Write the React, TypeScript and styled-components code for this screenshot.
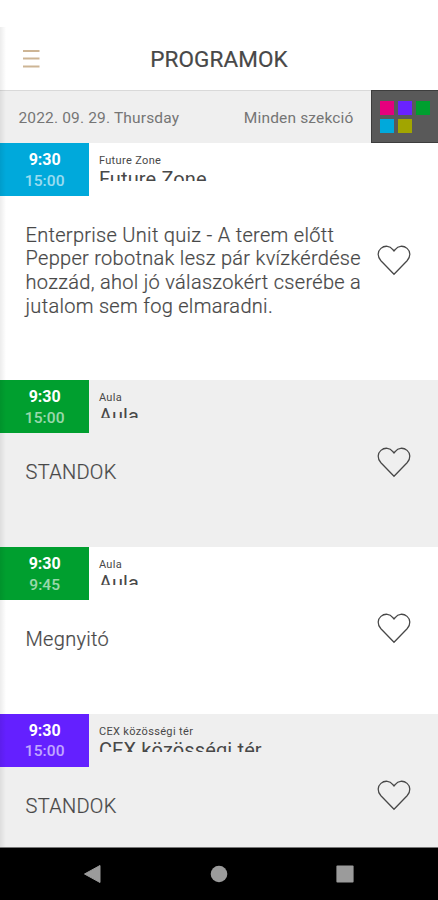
import React from "react";
import styled, { createGlobalStyle } from "styled-components";

const GlobalStyle = createGlobalStyle`
  * { box-sizing: border-box; }
  body { margin: 0; background: #fff; font-family: Roboto, sans-serif; color: #484848; }
`;

const Screen = styled.div`
  width: 438px;
  height: 900px;
  overflow: hidden;
  display: flex;
  flex-direction: column;
  background: #fff;
`;

const StatusSpace = styled.div`
  flex: 0 0 27px;
`;

const Content = styled.main`
  position: relative;
  flex: 1;
  min-height: 0;
  overflow: hidden;
`;

const EdgeShadow = styled.div`
  position: absolute;
  inset: 0 auto 0 0;
  width: 6px;
  background: linear-gradient(to right, rgba(0, 0, 0, 0.075), rgba(0, 0, 0, 0));
`;

const Header = styled.header`
  height: 63px;
  display: grid;
  grid-template-columns: 62px 1fr 62px;
  align-items: center;
`;

const MenuButton = styled.button`
  border: 0;
  padding: 0 0 0 22px;
  background: none;
  display: flex;
`;

const Title = styled.h1`
  margin: 0;
  padding-top: 1px;
  text-align: center;
  font-size: 22.5px;
  line-height: 28px;
  font-weight: 400;
  letter-spacing: 0.1px;
  color: #484848;
  -webkit-text-stroke: 0.2px #484848;
`;

const FilterBar = styled.div`
  height: 53px;
  display: flex;
  align-items: center;
  background: #efefef;
  border-top: 1px solid #d9d9d9;
  font-size: 15.5px;
  color: #757575;
`;

const DateLabel = styled.span`
  flex: 1;
  padding: 1px 0 0 18.5px;
  letter-spacing: 0.16px;
`;

const SectionLabel = styled.span`
  padding: 1px 17.5px 0 0;
  letter-spacing: 0.16px;
`;

const SectionButton = styled.button`
  width: 67px;
  height: 53px;
  margin-top: -1px;
  padding: 10px 0 0 8px;
  border: 1px solid #3d3d3d;
  border-right: 0;
  background: #595959;
  display: grid;
  grid-template-columns: repeat(3, 14px);
  grid-auto-rows: 14px;
  gap: 4px;
`;

const Swatch = styled.span<{ $color: string }>`
  background: ${(p) => p.$color};
`;

const Row = styled.article<{ $shaded: boolean }>`
  background: ${(p) => (p.$shaded ? "#efefef" : "#fff")};
  padding-bottom: 62.2px;
`;

const RowHead = styled.div`
  display: flex;
  height: 52.9px;
`;

const TimeBox = styled.div<{ $color: string }>`
  width: 89.4px;
  padding-top: 7px;
  background: ${(p) => p.$color};
  color: #fff;
  text-align: center;
  font-size: 16px;
  line-height: 20.5px;
`;

const Start = styled.div`
  font-weight: 700;
`;

const End = styled.div`
  opacity: 0.6;
  font-weight: 500;
  font-size: 15.5px;
  letter-spacing: 0.1px;
`;

const Place = styled.div`
  padding: 11px 0 0 9.5px;
`;

const PlaceSmall = styled.div`
  font-size: 11px;
  line-height: 13px;
  letter-spacing: 0.35px;
`;

const PlaceLarge = styled.div`
  height: 14px;
  overflow: hidden;
  font-size: 20px;
  line-height: 25px;
  letter-spacing: 0.13px;
`;

const RowBody = styled.div`
  padding: 28px 27.5px 0 25.5px;
  display: flex;
  align-items: center;
`;

const Description = styled.p`
  flex: 1;
  margin: 0;
  font-size: 20px;
  line-height: 23.6px;
  font-weight: 300;
  letter-spacing: 0.3px;
  -webkit-text-stroke: 0.2px #484848;
  white-space: pre-line;
`;

const LikeButton = styled.button`
  border: 0;
  padding: 0;
  margin: -30px 0 -8px;
  background: none;
  display: flex;
`;

const NavBar = styled.nav`
  flex: 0 0 52.6px;
  background: #000;
  border-top: 1px solid #777;
  display: flex;
  align-items: center;
  justify-content: space-between;
  padding: 0 84px 0 83px;
`;

const SWATCHES = ["#e5007d", "#6922ff", "#009f2f", "#00a9db", "#a1a500"];

const PROGRAMS = [
  {
    color: "#00a9db",
    end: "15:00",
    place: "Future Zone",
    text: "Enterprise Unit quiz - A terem előtt\nPepper robotnak lesz pár kvízkérdése\nhozzád, ahol jó válaszokért cserébe a\njutalom sem fog elmaradni.",
  },
  { color: "#009f2f", end: "15:00", place: "Aula", text: "STANDOK" },
  { color: "#009f2f", end: "9:45", place: "Aula", text: "Megnyitó" },
  { color: "#6420ff", end: "15:00", place: "CEX közösségi tér", text: "STANDOK" },
];

const Heart = () => (
  <svg width="34" height="31" viewBox="0 0 35 32" fill="none" stroke="#484848" strokeWidth="1.3">
    <path d="M17.5 30.2 L4 16.3 C-.1 11.7 .6 6.4 4 3.5 C8 .1 13.4 .8 16 4.4 L17.5 6.2 L19 4.4 C21.6 .8 27 .1 31 3.5 C34.4 6.4 35.1 11.7 31 16.3 Z" />
  </svg>
);

export default function App() {
  return (
    <>
      <GlobalStyle />
      <Screen>
        <StatusSpace />
        <Content>
          <Header>
            <MenuButton aria-label="Menu">
              <svg width="18" height="20" viewBox="0 0 18 20" stroke="#cdb595" strokeWidth="2">
                <path d="M1 2H17.5M1 9.6H17.5M1 17.4H17.5" />
              </svg>
            </MenuButton>
            <Title>PROGRAMOK</Title>
          </Header>
          <FilterBar>
            <DateLabel>2022. 09. 29. Thursday</DateLabel>
            <SectionLabel>Minden szekció</SectionLabel>
            <SectionButton aria-label="Sections">
              {SWATCHES.map((c) => (
                <Swatch key={c} $color={c} />
              ))}
            </SectionButton>
          </FilterBar>
          {PROGRAMS.map((p, i) => (
            <Row key={i} $shaded={i % 2 === 1}>
              <RowHead>
                <TimeBox $color={p.color}>
                  <Start>9:30</Start>
                  <End>{p.end}</End>
                </TimeBox>
                <Place>
                  <PlaceSmall>{p.place}</PlaceSmall>
                  <PlaceLarge>{p.place}</PlaceLarge>
                </Place>
              </RowHead>
              <RowBody>
                <Description>{p.text}</Description>
                <LikeButton aria-label="Like">
                  <Heart />
                </LikeButton>
              </RowBody>
            </Row>
          ))}
          <EdgeShadow />
        </Content>
        <NavBar>
          <svg width="18" height="20" viewBox="0 0 18 20">
            <path d="M17 1.5V18.5L1.5 10Z" fill="#9b9b9b" stroke="#9b9b9b" strokeLinejoin="round" />
          </svg>
          <svg width="18" height="18" viewBox="0 0 18 18">
            <circle cx="9" cy="9" r="8.3" fill="#9b9b9b" />
          </svg>
          <svg width="18" height="18" viewBox="0 0 18 18">
            <rect x=".4" y=".4" width="17.2" height="17.2" rx="1" fill="#9b9b9b" />
          </svg>
        </NavBar>
      </Screen>
    </>
  );
}
